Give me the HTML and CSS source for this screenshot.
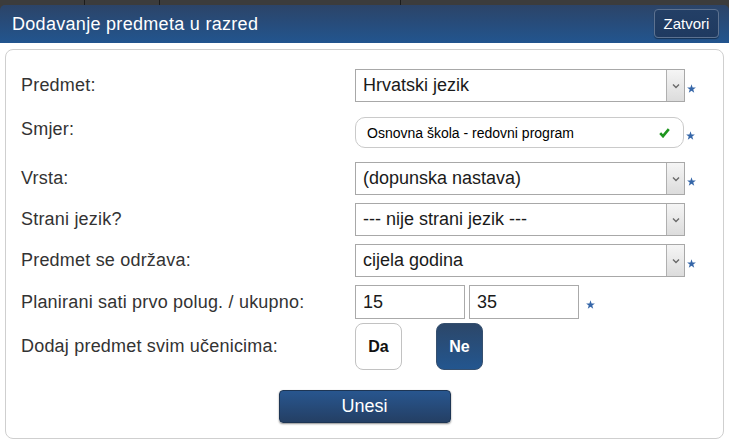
FILE: index.html
```html
<!DOCTYPE html>
<html lang="hr">
<head>
<meta charset="utf-8">
<title>Dodavanje predmeta u razred</title>
<link rel="stylesheet" href="styles.css">
</head>
<body>
<div class="top">
  <div class="page-strip"><span class="seg seg-a"></span><span class="seg seg-b"></span><span class="seg seg-c"></span></div>
  <header class="dlg-head">
    <h1 class="dlg-title">Dodavanje predmeta u razred</h1>
    <button class="btn-close" type="button">Zatvori</button>
  </header>
</div>
<main class="dlg-body">
  <form class="panel">
    <div class="row">
      <label class="lbl">Predmet:</label>
      <div class="ctrl">
        <div class="select"><span class="select-value">Hrvatski jezik</span><span class="select-arrow"><svg width="8" height="6" viewBox="0 0 8 6"><path d="M1 1.5l3 3 3-3" stroke="#6a6a6a" stroke-width="1.4" fill="none"/></svg></span></div>
        <svg class="req" width="9" height="9" viewBox="0 0 7 7"><polygon points="3.5,0.2 4.35,2.63 6.92,2.69 4.88,4.25 5.62,6.71 3.5,5.25 1.38,6.71 2.12,4.25 0.08,2.69 2.65,2.63" fill="#3566a8"/></svg>
      </div>
    </div>
    <div class="row row-smjer">
      <label class="lbl lbl-top">Smjer:</label>
      <div class="ctrl">
        <div class="pill"><span>Osnovna škola - redovni program</span><svg width="11" height="10" viewBox="0 0 11 10"><path d="M1.2 5.2l2.8 3 5.8-7" stroke="#1f961f" stroke-width="2.6" fill="none" stroke-linejoin="miter"/></svg></div>
        <svg class="req" width="9" height="9" viewBox="0 0 7 7"><polygon points="3.5,0.2 4.35,2.63 6.92,2.69 4.88,4.25 5.62,6.71 3.5,5.25 1.38,6.71 2.12,4.25 0.08,2.69 2.65,2.63" fill="#3566a8"/></svg>
      </div>
    </div>
    <div class="row row-vrsta">
      <label class="lbl">Vrsta:</label>
      <div class="ctrl">
        <div class="select"><span class="select-value">(dopunska nastava)</span><span class="select-arrow"><svg width="8" height="6" viewBox="0 0 8 6"><path d="M1 1.5l3 3 3-3" stroke="#6a6a6a" stroke-width="1.4" fill="none"/></svg></span></div>
        <svg class="req" width="9" height="9" viewBox="0 0 7 7"><polygon points="3.5,0.2 4.35,2.63 6.92,2.69 4.88,4.25 5.62,6.71 3.5,5.25 1.38,6.71 2.12,4.25 0.08,2.69 2.65,2.63" fill="#3566a8"/></svg>
      </div>
    </div>
    <div class="row">
      <label class="lbl">Strani jezik?</label>
      <div class="ctrl">
        <div class="select"><span class="select-value">--- nije strani jezik ---</span><span class="select-arrow"><svg width="8" height="6" viewBox="0 0 8 6"><path d="M1 1.5l3 3 3-3" stroke="#6a6a6a" stroke-width="1.4" fill="none"/></svg></span></div>
      </div>
    </div>
    <div class="row">
      <label class="lbl">Predmet se održava:</label>
      <div class="ctrl">
        <div class="select"><span class="select-value">cijela godina</span><span class="select-arrow"><svg width="8" height="6" viewBox="0 0 8 6"><path d="M1 1.5l3 3 3-3" stroke="#6a6a6a" stroke-width="1.4" fill="none"/></svg></span></div>
        <svg class="req" width="9" height="9" viewBox="0 0 7 7"><polygon points="3.5,0.2 4.35,2.63 6.92,2.69 4.88,4.25 5.62,6.71 3.5,5.25 1.38,6.71 2.12,4.25 0.08,2.69 2.65,2.63" fill="#3566a8"/></svg>
      </div>
    </div>
    <div class="row">
      <label class="lbl">Planirani sati prvo polug. / ukupno:</label>
      <div class="ctrl ctrl-nums">
        <input class="num" type="text" value="15">
        <input class="num" type="text" value="35">
        <svg class="req req-num" width="9" height="9" viewBox="0 0 7 7"><polygon points="3.5,0.2 4.35,2.63 6.92,2.69 4.88,4.25 5.62,6.71 3.5,5.25 1.38,6.71 2.12,4.25 0.08,2.69 2.65,2.63" fill="#3566a8"/></svg>
      </div>
    </div>
    <div class="row row-dodaj">
      <label class="lbl">Dodaj predmet svim učenicima:</label>
      <div class="ctrl ctrl-opts">
        <button class="opt" type="button">Da</button>
        <button class="opt opt-on" type="button">Ne</button>
      </div>
    </div>
    <div class="actions">
      <button class="btn-submit" type="button">Unesi</button>
    </div>
  </form>
</main>
</body>
</html>
```
FILE: styles.css
```css
* { box-sizing: border-box; }
html, body { margin: 0; padding: 0; background: #fff; }
body {
  width: 729px;
  height: 443px;
  overflow: hidden;
  font-family: "Liberation Sans", Arial, sans-serif;
}

.top { background: #3c3c3c; }
.page-strip { display: flex; height: 5px; }
.seg { border-right: 1px solid #1c1c1c; }
.seg-a { width: 85px; }
.seg-b { width: 75px; }
.seg-c { width: 241px; }

.dlg-head {
  height: 38px;
  display: flex;
  align-items: center;
  justify-content: space-between;
  padding: 0 10px 0 12px;
  background: linear-gradient(#2c4468, #22558f);
  border-radius: 5px 5px 0 0;
}
.dlg-title {
  margin: 0;
  font-size: 18px;
  font-weight: normal;
  letter-spacing: 0.3px;
  color: #fff;
}
.btn-close {
  height: 29px;
  width: 65px;
  margin-top: -1px;
  padding: 0;
  font-family: "Liberation Sans", Arial, sans-serif;
  font-size: 15px;
  color: #fff;
  background: linear-gradient(#233f66, #1f3a60);
  border: 1px solid #5d7290;
  border-radius: 4px;
  box-shadow: 0 1px 1px rgba(0,0,0,0.4);
}

.dlg-body { padding: 6px 5px 4px 5px; }
.panel {
  height: 390px;
  border: 1px solid #cfcfcf;
  border-radius: 8px;
  padding: 19px 15px 16px 15px;
  display: flex;
  flex-direction: column;
  gap: 8px;
}

.row {
  display: grid;
  grid-template-columns: 334px auto;
  align-items: center;
}
.row-smjer { margin-top: 7px; align-items: start; }
.row-vrsta { margin-top: 6px; }
.row-dodaj { margin-top: -4px; }

.lbl {
  font-size: 18px;
  letter-spacing: 0.2px;
  color: #333;
}
.lbl-top { padding-top: 2px; }

.ctrl { display: flex; align-items: center; }
.req { margin-left: 2px; margin-top: 5px; flex: none; }

.select {
  width: 330px;
  height: 33px;
  border: 1px solid #a8a8a8;
  background: #fff;
  display: flex;
}
.select-value {
  flex: 1;
  display: flex;
  align-items: center;
  padding-left: 7px;
  font-size: 18px;
  color: #1a1a1a;
}
.select-arrow {
  width: 18px;
  border-left: 1px solid #b0b0b0;
  background: linear-gradient(#f5f5f5, #dcdcdc);
  display: flex;
  align-items: center;
  justify-content: center;
}

.pill {
  width: 329px;
  height: 31px;
  border: 1px solid #cacaca;
  border-radius: 10px;
  display: flex;
  align-items: center;
  justify-content: space-between;
  padding: 0 13px 0 11px;
  font-size: 14px;
  color: #000;
}

.ctrl-nums { gap: 4px; }
.num {
  width: 110px;
  height: 34px;
  border: 1px solid #aaa;
  padding: 0 7px;
  font-family: "Liberation Sans", Arial, sans-serif;
  font-size: 18px;
  color: #1a1a1a;
  background: #fff;
}
.req-num { margin-left: 3px; }

.ctrl-opts { gap: 34px; }
.opt {
  width: 47px;
  height: 47px;
  padding: 0;
  border-radius: 8px;
  border: 1px solid #c2c2c2;
  background: #fff;
  font-family: "Liberation Sans", Arial, sans-serif;
  font-size: 16px;
  font-weight: bold;
  color: #111;
}
.opt-on {
  border-color: #36506f;
  background: linear-gradient(#2c4769, #23568f);
  color: #fff;
}

.actions {
  margin-top: 12px;
  display: flex;
  justify-content: center;
}
.btn-submit {
  width: 172px;
  height: 33px;
  padding: 0;
  border: 1px solid #1d3554;
  border-radius: 4px;
  background: linear-gradient(#28568f, #243f64);
  box-shadow: 0 1px 2px rgba(0,0,0,0.45);
  font-family: "Liberation Sans", Arial, sans-serif;
  font-size: 18px;
  color: #fff;
}
```
